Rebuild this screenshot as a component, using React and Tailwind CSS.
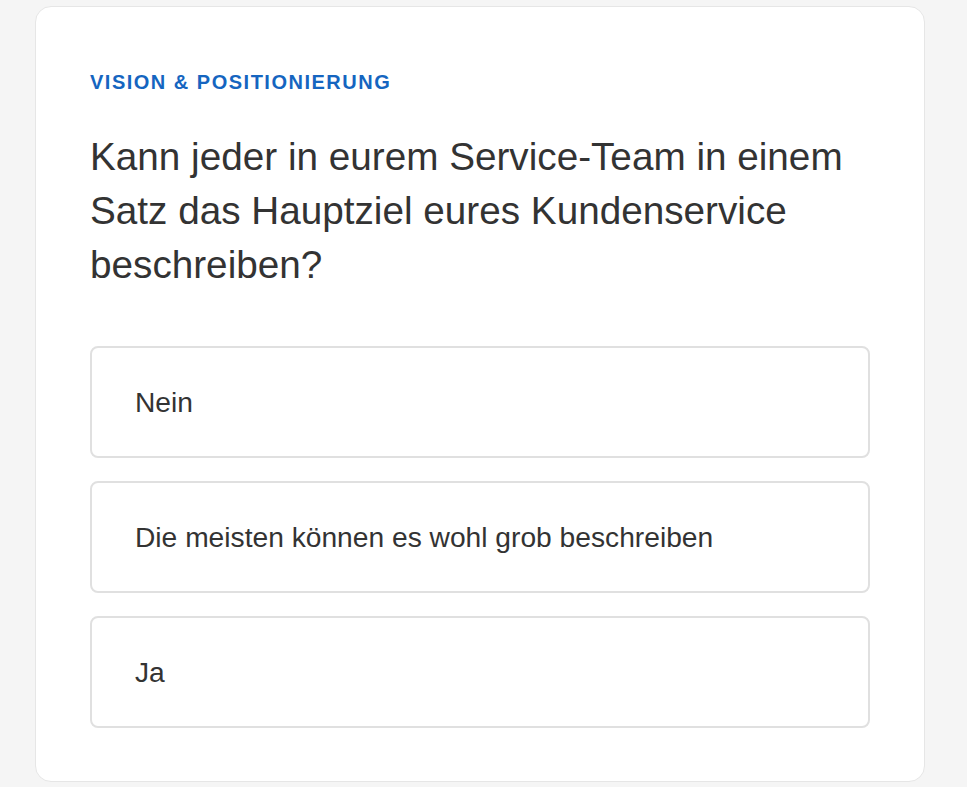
export default function App() {
  const options = ['Nein', 'Die meisten können es wohl grob beschreiben', 'Ja'];
  return (
    <div className="min-h-screen bg-[#f5f5f5] pt-[6px] pl-[35px] pr-[42px]" style={{ fontFamily: '"Liberation Sans", Arial, sans-serif' }}>
      <div className="w-[890px] bg-white border border-[#e6e6e6] rounded-2xl pl-[54px] pr-[54px] pt-[63px] pb-[53px]">
        <div className="text-[20px] leading-[24px] font-bold tracking-[1.5px] text-[#1565c0]">
          VISION &amp; POSITIONIERUNG
        </div>
        <h2 className="mt-[36px] text-[38.7px] leading-[54px] text-[#333333] font-normal">
          Kann jeder in eurem Service-Team in einem Satz das Hauptziel eures Kundenservice beschreiben?
        </h2>
        <div className="mt-[54px] flex flex-col gap-[23px]">
          {options.map((o) => (
            <button
              key={o}
              className="h-[112px] w-full text-left border-2 border-[#e0e0e0] rounded-lg px-[43px] text-[28.2px] text-[#333333] bg-white"
            >
              {o}
            </button>
          ))}
        </div>
      </div>
    </div>
  );
}
